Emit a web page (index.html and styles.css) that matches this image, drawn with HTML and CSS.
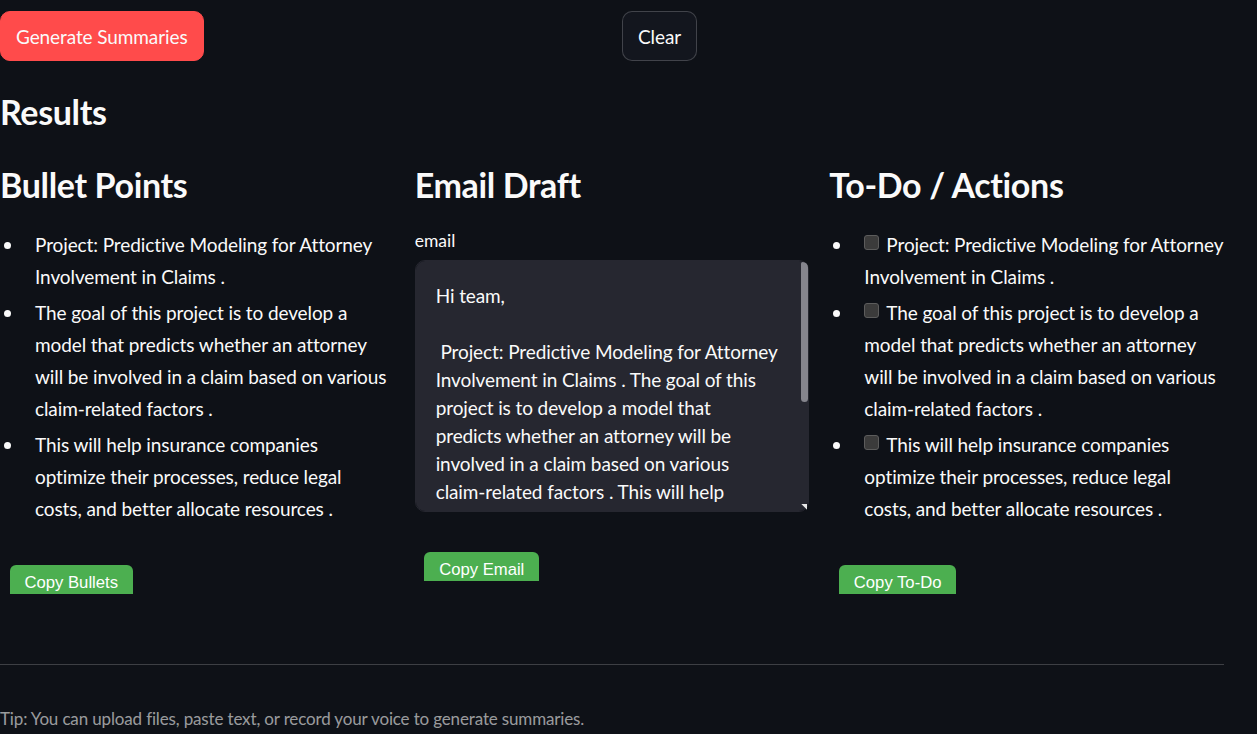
FILE: index.html
```html
<!DOCTYPE html>
<html lang="en">
<head>
<meta charset="utf-8">
<title>Summaries</title>
<link rel="stylesheet" href="styles.css">
</head>
<body>
<main class="app">
  <div class="row-top">
    <div class="cell"><button class="btn btn-primary">Generate Summaries</button></div>
    <div class="cell"><button class="btn btn-secondary">Clear</button></div>
  </div>

  <h3 class="h3 results">Results</h3>

  <div class="cols3">
    <section class="col">
      <h3 class="h3">Bullet Points</h3>
      <ul class="list">
        <li class="item"><span class="dot"></span><span class="txt">Project: Predictive Modeling for Attorney Involvement in Claims .</span></li>
        <li class="item"><span class="dot"></span><span class="txt">The goal of this project is to develop a model that predicts whether an attorney will be involved in a claim based on various claim-related factors .</span></li>
        <li class="item"><span class="dot"></span><span class="txt">This will help insurance companies<br>optimize their processes, reduce legal<br>costs, and better allocate resources .</span></li>
      </ul>
      <div class="copy-frame"><button class="copy-btn">Copy Bullets</button></div>
    </section>

    <section class="col">
      <h3 class="h3">Email Draft</h3>
      <label class="label" for="email">email</label>
      <div class="area-wrap">
        <textarea id="email" class="area">Hi team,

 Project: Predictive Modeling for Attorney Involvement in Claims . The goal of this project is to develop a model that predicts whether an attorney will be involved in a claim based on various claim-related factors . This will help insurance companies optimize their processes, reduce legal costs, and better allocate resources .

Please let me know if you have any questions.

Best regards,</textarea>
        <span class="thumb"></span>
        <span class="grip"></span>
      </div>
      <div class="copy-frame"><button class="copy-btn">Copy Email</button></div>
    </section>

    <section class="col">
      <h3 class="h3">To-Do / Actions</h3>
      <ul class="list">
        <li class="item"><span class="dot"></span><span class="txt"><span class="check"></span>Project: Predictive Modeling for Attorney Involvement in Claims .</span></li>
        <li class="item"><span class="dot"></span><span class="txt"><span class="check"></span>The goal of this project is to develop a model that predicts whether an attorney will be involved in a claim based on various claim-related factors .</span></li>
        <li class="item"><span class="dot"></span><span class="txt"><span class="check"></span>This will help insurance companies optimize their processes, reduce legal<br>costs, and better allocate resources .</span></li>
      </ul>
      <div class="copy-frame"><button class="copy-btn">Copy To-Do</button></div>
    </section>
  </div>

  <hr class="divider">
  <p class="tip">Tip: You can upload files, paste text, or record your voice to generate summaries.</p>
</main>
</body>
</html>
```

FILE: styles.css
```css
html, body {
  margin: 0;
  padding: 0;
  background: #0e1117;
}

body {
  color: #fafafa;
  font-family: "Lato", "Source Sans Pro", "Noto Sans", sans-serif;
  font-size: 19px;
  letter-spacing: -0.1px;
  line-height: 32px;
}

.app {
  width: 1224px;
  padding-top: 11px;
}

.row-top {
  display: grid;
  grid-template-columns: 1fr 1fr;
  column-gap: 20px;
}

.btn {
  height: 50px;
  padding: 0 15px;
  border-radius: 10px;
  font-family: inherit;
  font-size: 19px;
  letter-spacing: -0.1px;
  color: #fafafa;
  cursor: pointer;
}

.btn-primary {
  background: #ff4b4b;
  border: 1px solid #ff4b4b;
}

.btn-secondary {
  background: #13161e;
  border: 1px solid rgba(250, 250, 250, 0.2);
}

.h3 {
  margin: 0;
  font-size: 34px;
  letter-spacing: -0.35px;
  line-height: 42px;
  font-weight: 700;
}

.results {
  margin-top: 30px;
}

.cols3 {
  margin-top: 31px;
  display: grid;
  grid-template-columns: 1fr 1fr 1fr;
  column-gap: 20px;
  align-items: start;
}

.col {
  display: flex;
  flex-direction: column;
  min-width: 0;
}

.list {
  list-style: none;
  margin: 23px 0 0 0;
  padding: 0;
  display: flex;
  flex-direction: column;
  gap: 4px;
}

.item {
  display: flex;
}

.dot {
  flex: 0 0 35px;
}

.dot::before {
  content: "";
  display: block;
  width: 7px;
  height: 7px;
  border-radius: 50%;
  background: #fafafa;
  margin: 13px 0 0 4px;
}

.txt {
  flex: 1;
  min-width: 0;
}

.check {
  display: inline-block;
  width: 13px;
  height: 13px;
  margin-right: 7px;
  vertical-align: 2px;
  background: #3b3b3b;
  border: 1px solid #5c5c5c;
  border-radius: 3px;
}

.label {
  margin-top: 23px;
  font-size: 17.5px;
  letter-spacing: 0;
  line-height: 24px;
}

.area-wrap {
  position: relative;
  margin-top: 7px;
  height: 252px;
}

.area {
  display: block;
  box-sizing: border-box;
  width: 100%;
  height: 252px;
  padding: 21px 28px 21px 20px;
  background: #262730;
  color: #fafafa;
  border: 1px solid #262730;
  border-radius: 10px;
  font-family: inherit;
  font-size: 19px;
  letter-spacing: -0.1px;
  line-height: 28px;
  resize: none;
  outline: none;
  overflow-y: scroll;
  scrollbar-width: none;
}

.area::-webkit-scrollbar {
  display: none;
}

.thumb {
  position: absolute;
  right: 1px;
  top: 2px;
  width: 7px;
  height: 140px;
  background: #85858d;
  border-radius: 2px 6px 4px 4px;
}

.grip {
  position: absolute;
  right: 2px;
  bottom: 2px;
  width: 6px;
  height: 6px;
  background: #e8e8e8;
  clip-path: polygon(0 0, 100% 0, 100% 100%);
}

.copy-frame {
  margin-top: 40px;
  height: 29px;
  overflow: hidden;
  padding-left: 9.5px;
}

.copy-btn {
  padding: 8px 15px;
  background: #4caf50;
  color: #ffffff;
  border: none;
  border-radius: 6px;
  font-family: "Liberation Sans", Arial, sans-serif;
  font-size: 16.67px;
  letter-spacing: 0;
  line-height: 19px;
  cursor: pointer;
}

.divider {
  margin: 70px 0 0 0;
  border: none;
  border-top: 1px solid rgba(250, 250, 250, 0.2);
}

.tip {
  margin: 40px 0 0 0;
  font-size: 17px;
  letter-spacing: -0.15px;
  line-height: 28px;
  color: rgba(250, 250, 250, 0.6);
}
```
